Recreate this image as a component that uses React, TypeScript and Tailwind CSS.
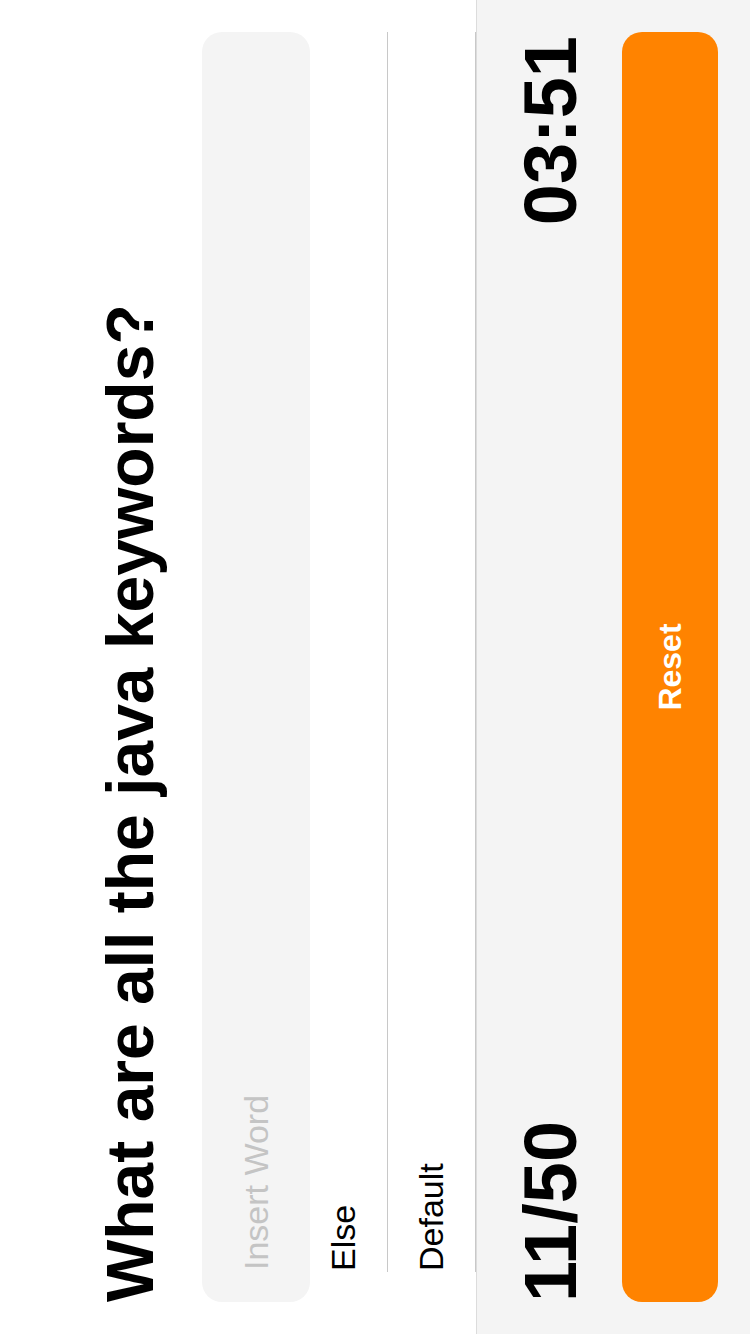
import { useState } from "react";

const words = ["Else", "Default"];

function QuizScreen() {
  const [word, setWord] = useState("");

  return (
    <div className="flex h-[750px] w-[1334px] origin-top-left flex-col bg-white text-black [transform:translateY(1334px)_rotate(-90deg)] [font-family:'Liberation_Sans',Arial,sans-serif]">
      <section className="flex h-[476px] flex-col px-[32px] pt-[97px]">
        <h1 className="h-[66px] text-[66px] font-bold leading-[66px] whitespace-nowrap">What are all the java keywords?</h1>
        <input
          value={word}
          onChange={(e) => setWord(e.target.value)}
          placeholder="Insert Word"
          className="mt-[39px] h-[108px] w-full shrink-0 rounded-[20px] bg-[#f4f4f4] px-[32px] text-[34px] outline-none placeholder:text-[#c4c4c4]"
          type="text"
        />
        <ul className="relative -mt-[10px] ml-[30px]">
          {words.map((w) => (
            <li key={w} className="flex h-[88px] items-center border-b border-[#c8c8c8] pl-[1px] text-[34px]">
              {w}
            </li>
          ))}
        </ul>
      </section>

      <section className="flex flex-1 flex-col border-t border-[#dcdcdc] bg-[#f4f4f4] px-[32px] pt-[37px] pb-[32px]">
        <div className="flex h-[74px] items-center justify-between text-[74px] font-bold leading-[74px]">
          <span>11/50</span>
          <span className="mr-[4px]">03:51</span>
        </div>
        <button className="mt-[34px] flex h-[96px] w-full items-center justify-center rounded-[20px] bg-[#ff8300] text-[32px] font-bold text-white">
          Reset
        </button>
      </section>
    </div>
  );
}

export default function App() {
  return (
    <div className="h-[1334px] w-[750px] overflow-hidden bg-white">
      <QuizScreen />
    </div>
  );
}
